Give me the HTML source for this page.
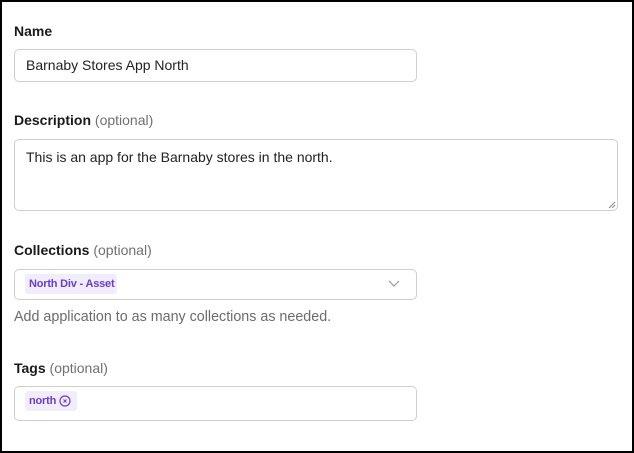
<!DOCTYPE html>
<html><head><style>
*{box-sizing:border-box;margin:0;padding:0}
body{width:634px;height:453px;background:#fff;font-family:"Liberation Sans",sans-serif;color:#1f1f1f;position:relative;overflow:hidden}
.frame{position:absolute;left:0;top:0;width:634px;height:453px;border:2px solid #000}
.lbl{position:absolute;left:14px;font-size:14px;font-weight:bold;color:#1a1a1a}
.lbl span{font-weight:normal;color:#707070}
.box{position:absolute;left:14px;border:1px solid #cfcfcf;border-radius:5px;background:#fff}
.txt{position:absolute;font-size:14px;color:#222}
.chip{position:absolute;background:#f1edfd;color:#6a3fc6;font-size:11px;font-weight:bold;border-radius:3px;padding:0 4px;line-height:20px;white-space:nowrap;letter-spacing:-0.2px}
</style></head><body>
<div class="frame"></div>
<div class="lbl" style="top:23px">Name</div>
<div class="box" style="top:49px;width:403px;height:33px"></div>
<div class="txt" style="left:26px;top:57px">Barnaby Stores App North</div>
<div class="lbl" style="top:112px">Description <span>(optional)</span></div>
<div class="box" style="top:139px;width:604px;height:72px"></div>
<div class="txt" style="left:26px;top:149px">This is an app for the Barnaby stores in the north.</div>
<svg style="position:absolute;left:608px;top:201px" width="8" height="8"><path d="M1 7L7 1M4 7L7 4" stroke="#888" stroke-width="1"/></svg>
<div class="lbl" style="top:242px">Collections <span>(optional)</span></div>
<div class="box" style="top:269px;width:403px;height:31px"></div>
<div class="chip" style="left:25px;top:274px;width:92px">North Div - Asset</div>
<svg style="position:absolute;left:388px;top:280px" width="12" height="8"><path d="M1 1L6 6L11 1" stroke="#999" stroke-width="1.2" fill="none"/></svg>
<div class="txt" style="left:14px;top:309px;color:#6b6b6b;font-size:14.3px">Add application to as many collections as needed.</div>
<div class="lbl" style="top:360px">Tags <span>(optional)</span></div>
<div class="box" style="top:386px;width:403px;height:35px"></div>
<div class="chip" style="left:25px;top:391px;width:52px">north</div>
<svg style="position:absolute;left:59px;top:395px" width="12" height="12"><circle cx="6" cy="6" r="5" stroke="#6a3fc6" stroke-width="1.2" fill="none"/><path d="M4.5 4.5L7.5 7.5M7.5 4.5L4.5 7.5" stroke="#6a3fc6" stroke-width="1"/></svg>
</body></html>
